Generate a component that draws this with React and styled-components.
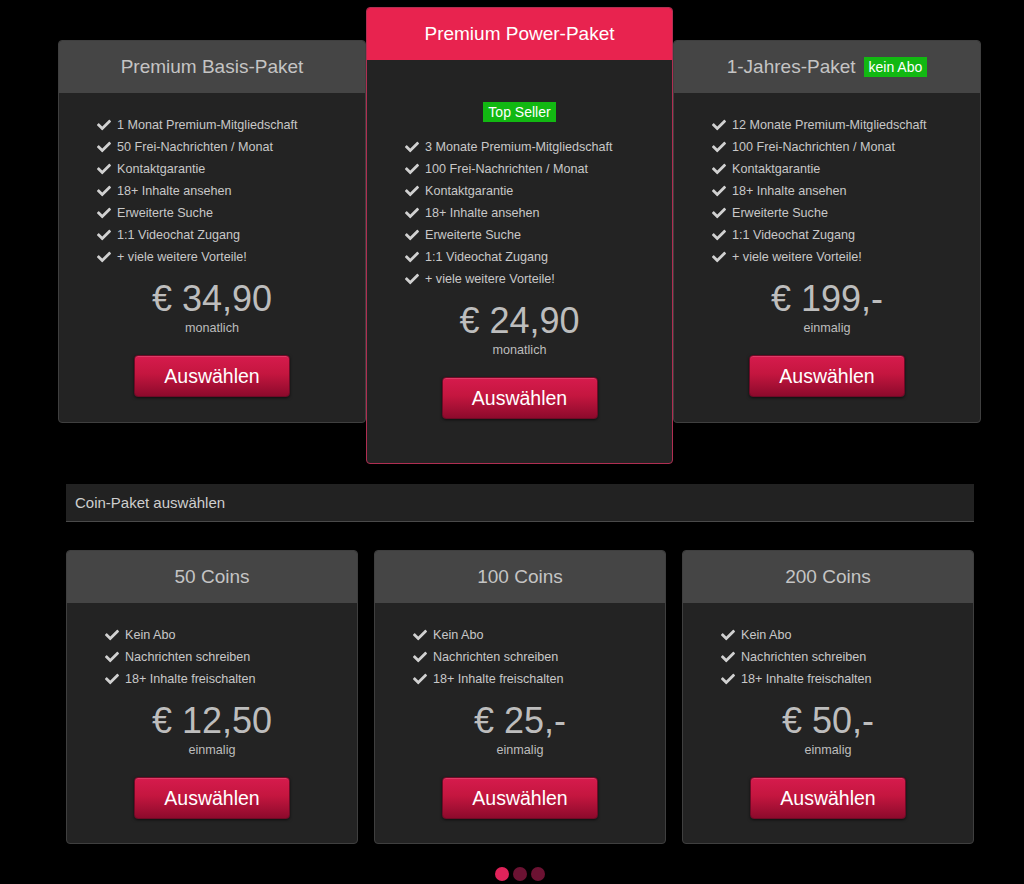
import React from 'react';
import styled, { createGlobalStyle } from 'styled-components';
import { FaCheck } from 'react-icons/fa';

const GlobalStyle = createGlobalStyle`
  html, body {
    margin: 0;
    padding: 0;
    background: #000;
    font-family: "Liberation Sans", Arial, sans-serif;
  }
`;

const Page = styled.div`
  padding-top: 7px;
  width: 1024px;
  min-height: 884px;
  box-sizing: border-box;
`;

const TopRow = styled.div`
  display: grid;
  grid-template-columns: 308px 307px 308px;
  align-items: start;
  margin-left: 58px;
  width: 923px;
`;

const Card = styled.div`
  box-sizing: border-box;
  background: #232323;
  border: 1px solid ${(p) => (p.$featured ? '#b02e52' : '#3f3f3f')};
  border-radius: 4px;
  overflow: hidden;
  margin-top: ${(p) => (p.$featured || p.$flat ? 0 : 33)}px;
  padding-bottom: ${(p) => (p.$featured ? 44 : p.$flat ? 24 : 25)}px;
  position: relative;
  z-index: ${(p) => (p.$featured ? 2 : 1)};
  text-align: center;
`;

const CardHeader = styled.div`
  height: 52px;
  display: flex;
  align-items: center;
  justify-content: center;
  gap: 8px;
  background: ${(p) => (p.$featured ? '#e8234f' : '#454545')};
  color: ${(p) => (p.$featured ? '#fff' : '#c4c4c4')};
  font-size: 19px;
`;

const Badge = styled.span`
  display: inline-block;
  background: #12b812;
  color: #fff;
  font-size: 14px;
  line-height: 20px;
  padding: 0 5px;
`;

const TopBadge = styled(Badge)`
  margin-top: 42px;
`;

const FeatureList = styled.ul`
  list-style: none;
  margin: 0;
  padding: ${(p) => (p.$afterBadge ? 14 : 21)}px 0 0 38px;
  text-align: left;
`;

const Feature = styled.li`
  display: flex;
  align-items: center;
  gap: 6px;
  height: 22px;
  color: #c8c8c8;
  font-size: 12.6px;

  svg {
    width: 14px;
    height: 14px;
    color: #d0d0d0;
    flex: none;
  }
`;

const Price = styled.div`
  margin-top: 11px;
  font-size: 36px;
  line-height: 40px;
  color: #bdbdbd;
`;

const Period = styled.div`
  margin-top: 1px;
  font-size: 12.6px;
  line-height: 16px;
  color: #bdbdbd;
`;

const SelectButton = styled.button`
  display: block;
  margin: 19px auto 0;
  width: 156px;
  height: 42px;
  border: 1px solid #6e0a26;
  border-radius: 4px;
  background: linear-gradient(180deg, #d61b4d 0%, #c4163f 45%, #8d0a2c 100%);
  box-shadow: 0 1px 3px rgba(0, 0, 0, 0.6), inset 0 1px 0 rgba(255, 255, 255, 0.15);
  color: #fff;
  font-family: inherit;
  font-size: 19.5px;
  cursor: pointer;
`;

const SectionBar = styled.div`
  margin: 20px 0 0 66px;
  width: 908px;
  height: 38px;
  box-sizing: border-box;
  background: #222;
  border-bottom: 1px solid #4a4a4a;
  display: flex;
  align-items: center;
  padding-left: 9px;
  color: #cfcfcf;
  font-size: 15px;
`;

const CoinRow = styled.div`
  display: grid;
  grid-template-columns: repeat(3, 292px);
  column-gap: 16px;
  margin: 28px 0 0 66px;
`;

const Dots = styled.div`
  display: flex;
  justify-content: center;
  gap: 4px;
  margin: 23px 0 0 16px;
`;

const Dot = styled.span`
  width: 14px;
  height: 14px;
  border-radius: 50%;
  background: ${(p) => (p.$active ? '#e0235a' : '#6b1232')};
`;

const basisFeatures = [
  '1 Monat Premium-Mitgliedschaft',
  '50 Frei-Nachrichten / Monat',
  'Kontaktgarantie',
  '18+ Inhalte ansehen',
  'Erweiterte Suche',
  '1:1 Videochat Zugang',
  '+ viele weitere Vorteile!',
];

const powerFeatures = [
  '3 Monate Premium-Mitgliedschaft',
  '100 Frei-Nachrichten / Monat',
  ...basisFeatures.slice(2),
];

const yearFeatures = [
  '12 Monate Premium-Mitgliedschaft',
  '100 Frei-Nachrichten / Monat',
  ...basisFeatures.slice(2),
];

const coinFeatures = ['Kein Abo', 'Nachrichten schreiben', '18+ Inhalte freischalten'];

const coins = [
  { title: '50 Coins', price: '€ 12,50' },
  { title: '100 Coins', price: '€ 25,-' },
  { title: '200 Coins', price: '€ 50,-' },
];

const Features = ({ items, afterBadge }) => (
  <FeatureList $afterBadge={afterBadge}>
    {items.map((f) => (
      <Feature key={f}>
        <FaCheck />
        {f}
      </Feature>
    ))}
  </FeatureList>
);

const App = () => (
  <Page>
    <GlobalStyle />
    <TopRow>
      <Card>
        <CardHeader>Premium Basis-Paket</CardHeader>
        <Features items={basisFeatures} />
        <Price>€ 34,90</Price>
        <Period>monatlich</Period>
        <SelectButton>Auswählen</SelectButton>
      </Card>
      <Card $featured>
        <CardHeader $featured>Premium Power-Paket</CardHeader>
        <TopBadge>Top Seller</TopBadge>
        <Features items={powerFeatures} afterBadge />
        <Price>€ 24,90</Price>
        <Period>monatlich</Period>
        <SelectButton>Auswählen</SelectButton>
      </Card>
      <Card>
        <CardHeader>
          1-Jahres-Paket <Badge>kein Abo</Badge>
        </CardHeader>
        <Features items={yearFeatures} />
        <Price>€ 199,-</Price>
        <Period>einmalig</Period>
        <SelectButton>Auswählen</SelectButton>
      </Card>
    </TopRow>

    <SectionBar>Coin-Paket auswählen</SectionBar>

    <CoinRow>
      {coins.map((c) => (
        <Card key={c.title} $flat>
          <CardHeader>{c.title}</CardHeader>
          <Features items={coinFeatures} />
          <Price>{c.price}</Price>
          <Period>einmalig</Period>
          <SelectButton>Auswählen</SelectButton>
        </Card>
      ))}
    </CoinRow>

    <Dots>
      <Dot $active />
      <Dot />
      <Dot />
    </Dots>
  </Page>
);

export default App;
